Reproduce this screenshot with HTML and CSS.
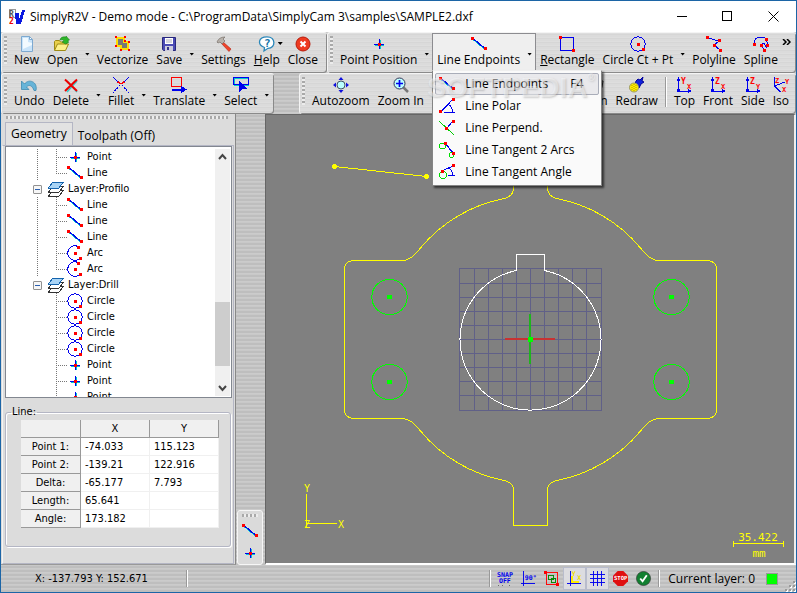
FILE: index.html
```html
<!DOCTYPE html>
<html lang="en">
<head>
<meta charset="utf-8">
<title>SimplyR2V</title>
<link rel="stylesheet" href="styles.css">
</head>
<body>
<svg class="defs" aria-hidden="true">
  <symbol id="i-line" viewBox="0 0 16 16"><path d="M2 3.500 14 13.500" stroke="#0cc" /><path d="M2 2.500 14 12.500" stroke="#00e" stroke-width="1.300"/><path d="M0 1h3v3H0zM13 11h3v3h-3z" fill="red"/></symbol>
  <symbol id="i-point" viewBox="0 0 16 16"><path d="M4 9.500h9M9.500 4v9" stroke="#0cc"/><path d="M3 8.500h10M8.500 3v10" stroke="#00e"/><path d="M7 7h3v3H7z" fill="red"/></symbol>
  <symbol id="i-circle" viewBox="0 0 16 16"><circle cx="8" cy="8" r="7.200" fill="none" stroke="#00e"/><path d="M7 7h3v3H7zM12 12h3v3h-3z" fill="red"/></symbol>
  <symbol id="i-arc" viewBox="0 0 16 16"><path d="M11 1.500A7.200 7.200 0 1 0 12 14" fill="none" stroke="#00e"/><path d="M7 7h3v3H7zM10 1h3v3h-3zM12 12h3v3h-3z" fill="red"/></symbol>
  <symbol id="i-layers" viewBox="0 0 16 16"><path d="M5 9.500h10.500L11 15H.5z" fill="#fff" stroke="#333"/><path d="M5 5.500h10.500L11 11H.5z" fill="#fff" stroke="#333"/><path d="M5 1h10.500L11 7H.5z" fill="#a9d4f5" stroke="#1463ad"/></symbol>
  <symbol id="i-polar" viewBox="0 0 16 16"><path d="M2 13.500 13 2" stroke="#00e" stroke-width="1.300"/><path d="M5 14.500h11" stroke="#00e"/><path d="M9 6q5 3 4 8" fill="none" stroke="#00e"/><path d="M13 0h3v3h-3zM0 12h3v3H0z" fill="red"/></symbol>
  <symbol id="i-perp" viewBox="0 0 16 16"><path d="M0 1 15 15" stroke="#0c0"/><path d="m7.500 8.500 6-7" stroke="#00e"/><path d="M13 0h3v3h-3zM6 7h3v3H6z" fill="red"/></symbol>
  <symbol id="i-tan2" viewBox="0 0 16 16"><circle cx="3.500" cy="4" r="3" fill="none" stroke="#0d0"/><circle cx="12.500" cy="13" r="2.500" fill="none" stroke="#0d0"/><path d="m6 1.500 8 9" stroke="#00e" stroke-width="1.300"/><path d="M5 0h3v3H5zM13 10h3v3h-3z" fill="red"/></symbol>
  <symbol id="i-tana" viewBox="0 0 16 16"><circle cx="4" cy="11" r="3.500" fill="none" stroke="#0d0"/><path d="m3 7 11-5M9 11.500h7M10 4q4 3 3 7" fill="none" stroke="#00e"/><path d="M2 6h3v3H2zM13 0h3v3h-3z" fill="red"/></symbol>
</svg>

<div class="window">
  <header class="titlebar">
    <svg class="logo" width="16" height="16" viewBox="0 0 16 16"><path d="M.5.500h6v8h-6z" fill="#fff" stroke="#999"/><text x="0" y="8" font-size="8" fill="#555">R</text><text x="0" y="15" font-size="8" fill="#e00">2</text><path d="M6 4h4v7l3-10h3l-4 14H7z" fill="#0a18e0"/></svg>
    <h1>SimplyR2V - Demo mode - C:\ProgramData\SimplyCam 3\samples\SAMPLE2.dxf</h1>
    <div class="caption">
      <button type="button" aria-label="Minimize"><svg width="11" height="11"><path d="M1 5.500h10" stroke="#000"/></svg></button>
      <button type="button" aria-label="Maximize"><svg width="11" height="11"><path d="M.5.500h9v9h-9z" fill="none" stroke="#000"/></svg></button>
      <button type="button" aria-label="Close window"><svg class="smooth" width="11" height="11"><path d="m.5.500 10 10m0-10-10 10" stroke="#000"/></svg></button>
    </div>
  </header>

  <div class="barrow">
    <div class="toolbar files">
      <i class="grip"></i>
      <button type="button" class="tool"><svg class="smooth" viewBox="0 0 16 16"><path d="M2.500.500h8l3 3v12h-11z" fill="#c9e4fa" stroke="#7da9d0"/><path d="M4 2h5v4l4 1v2L4 13z" fill="#f2faff"/><path d="M10.500.500v3h3z" fill="#fff" stroke="#7da9d0"/></svg>New</button>
      <button type="button" class="tool"><svg class="smooth" viewBox="0 0 16 16"><path d="M.5 14V5.500l1-1h4l1 1.500h6V9" fill="#e9d04c" stroke="#9f8a15"/><path d="m.5 14.500 3-6.500h11l-3 6.500z" fill="#fdf08a" stroke="#9f8a15"/><path d="M6 4q1-4 6-3v-1l3.500 4-1.500.500.500 2-3 1.500L8 6l2-1q-1-2-4-1z" fill="#2fb52a" stroke="#147a14" stroke-width=".5"/></svg>Open</button>
      <button type="button" class="drop" aria-label="Open recent"></button>
      <button type="button" class="tool"><svg viewBox="0 0 16 16"><path d="M2 2h7v4h4v7H6v-3H2z" fill="#777" stroke="#fd0" stroke-width="1.500"/><path d="M0 0h2v2H0zM9 0h2v2H9zM0 9h2v2H0zM5 13h2v2H5zM13 13h2v2h-2zM13 5h2v2h-2zM9 4h2v2H9z" fill="red"/></svg>Vectorize</button>
      <button type="button" class="tool"><svg class="smooth" viewBox="0 0 16 16"><path d="M1.500 1.500h13v13h-12l-1-1z" fill="#4a4ab4" stroke="#28287e"/><path d="M4 2h8v6H4z" fill="#fff"/><path d="M5 4h6M5 6h6" stroke="#aab"/><path d="M4 10h8v5H4z" fill="#ccd"/><path d="M6 11h2v3H6z" fill="#33338c"/></svg>Save</button>
      <button type="button" class="drop" aria-label="Save options"></button>
      <button type="button" class="tool"><svg class="smooth" viewBox="0 0 16 16"><path d="m6 5 9 8-2 2.500L5 7z" fill="#f0442a" stroke="#b02010" stroke-width=".6"/><path d="M1 6Q3 1 9 1L7 3l2 2-3 3-2-2-2 1z" fill="#b9b3ac" stroke="#776f68" stroke-width=".7"/></svg>Settings</button>
      <button type="button" class="tool help"><svg class="smooth" viewBox="0 0 16 16"><path d="M8 .800c9 0 9 11.500 1 11.500L5 15l.5-3.500C-2 9-1 .800 8 .800z" fill="#fff" stroke="#2b87ba" stroke-width="1.300"/><text x="5" y="11" font-size="11" class="mark">?</text></svg><span><u>H</u>elp</span></button>
      <button type="button" class="tool"><svg class="smooth" viewBox="0 0 16 16"><circle cx="8" cy="8" r="7" fill="#ee3a20" stroke="#b91b0b"/><path d="m5.500 5.500 5 5m0-5-5 5" stroke="#fff" stroke-width="2"/></svg>Close</button>
    </div>
    <div class="toolbar grow">
      <i class="grip"></i>
      <button type="button" class="tool"><svg viewBox="0 0 16 16"><use href="#i-point"/></svg>Point Position</button>
      <button type="button" class="drop" aria-label="Point tools"></button>
      <div class="open">
        <button type="button" class="tool"><svg viewBox="0 0 16 16"><use href="#i-line"/></svg>Line Endpoints</button>
        <button type="button" class="drop" aria-label="Line tools" aria-expanded="true"></button>
        <div class="menu">
          <button type="button" class="current"><svg><use href="#i-line"/></svg><span>Line Endpoints</span><kbd>F4</kbd></button>
          <button type="button"><svg><use href="#i-polar"/></svg><span>Line Polar</span></button>
          <button type="button"><svg><use href="#i-perp"/></svg><span>Line Perpend.</span></button>
          <button type="button"><svg><use href="#i-tan2"/></svg><span>Line Tangent 2 Arcs</span></button>
          <button type="button"><svg><use href="#i-tana"/></svg><span>Line Tangent Angle</span></button>
          <div class="watermark">SOFTPEDIA<sup>®</sup></div>
        </div>
      </div>
      <button type="button" class="tool"><svg viewBox="0 0 16 16"><path d="M1.500 1.500h13v13h-13z" fill="none" stroke="#00e"/><path d="M0 0h3v3H0zM13 13h3v3h-3z" fill="red"/></svg><span><u>R</u>ectangle</span></button>
      <button type="button" class="tool"><svg viewBox="0 0 16 16"><use href="#i-circle"/></svg>Circle Ct + Pt</button>
      <button type="button" class="drop" aria-label="Circle tools"></button>
      <button type="button" class="tool"><svg viewBox="0 0 16 16"><path d="m2 2 11 3-5 4 6 5" fill="none" stroke="#00e"/><path d="M0 0h3v3H0zM12 3h3v3h-3zM7 8h3v3H7zM13 13h3v3h-3z" fill="red"/></svg>Polyline</button>
      <button type="button" class="tool"><svg viewBox="0 0 16 16"><path d="M2 8C0 5 3 1 7 1s6 1 6 3 2 2 2 5-3 3-3 0-4-2-3 1l2 4" fill="none" stroke="#00e"/><path d="M0 7h3v3H0zM12 2h3v3h-3zM13 8h3v3h-3zM7 8h3v3H7zM10 13h3v3h-3z" fill="red"/></svg>Spline</button>
      <button type="button" class="more" aria-label="More tools"><svg class="smooth" width="9" height="6"><path d="m1 0 3 3-3 3M5 0l3 3-3 3" fill="none" stroke="#000" stroke-width="1.500"/></svg></button>
    </div>
  </div>

  <div class="barrow">
    <div class="toolbar edits">
      <i class="grip"></i>
      <button type="button" class="tool"><svg class="smooth" viewBox="0 0 16 16"><path d="M.5 4v8.500H8L5.500 10c3-3 6-1 7.500 3.500h2C17 5 8 1 3.500 7z" fill="#67b4d8" stroke="#3283ac" stroke-width=".7"/></svg>Undo</button>
      <button type="button" class="tool"><svg class="smooth" viewBox="0 0 16 16"><path d="m4 4 10 11M14 4 4 15" stroke="#3cc" stroke-width="1.500"/><path d="m2 2.500 12 11.500M14 2.500 2 14" stroke="#e00" stroke-width="2"/></svg>Delete</button>
      <button type="button" class="drop" aria-label="Delete options"></button>
      <button type="button" class="tool"><svg viewBox="0 0 16 16"><path d="m0 0 5 5m6 0 5-5" stroke="#00e"/><path d="m5 5q3 3 6 0" fill="none" stroke="red" stroke-width="1.500"/><path d="m7 8-7 8m9-8 7 8" stroke="#00e" stroke-dasharray="2 1"/></svg>Fillet</button>
      <button type="button" class="drop" aria-label="Fillet options"></button>
      <button type="button" class="tool"><svg viewBox="0 0 16 16"><path d="M.5.500h10v9h-10z" fill="none" stroke="red" stroke-width="1.400"/><path d="M2 13.500h9" stroke="#0cc"/><path d="M1 12.500h10" stroke="#00e" stroke-width="2"/><path d="m10 9 6 3.500-6 3.500z" fill="#00e"/></svg>Translate</button>
      <button type="button" class="drop" aria-label="Transform tools"></button>
      <button type="button" class="tool"><svg viewBox="0 0 16 16"><path d="M1.500 1.500h14v7h-14z" fill="none" stroke="#0cc"/><path d="M.5.500h15v7H.5z" fill="none" stroke="#00e"/><path d="m6 3 8 9H9.500L6 16z" fill="#00e"/></svg>Select</button>
      <button type="button" class="drop" aria-label="Select options"></button>
    </div>
    <div class="toolbar grow views">
      <i class="grip"></i>
      <button type="button" class="tool"><svg class="smooth" viewBox="0 0 16 16"><circle cx="8" cy="8" r="4" fill="#bff" stroke="#456"/><path d="m8 0 2.500 3h-5zM8 16l2.500-3h-5zM0 8l3-2.500v5zM16 8l-3-2.500v5z" fill="#11d"/></svg>Autozoom</button>
      <button type="button" class="tool"><svg class="smooth" viewBox="0 0 16 16"><path d="m10 10 5 5" stroke="#777" stroke-width="2.500"/><circle cx="6.500" cy="6.500" r="5.500" fill="#bff" stroke="#335"/><path d="M3 6.500h7M6.500 3v7" stroke="#00e" stroke-width="1.700"/></svg>Zoom In</button>
      <div class="endtools">
        <button type="button" class="tool"><svg class="smooth" viewBox="0 0 16 16"><path d="M3 15 1 9l2-1 2 1V2h2v5-6h2v6-5h2v5l1-3h2l-1 6-2 5z" fill="#fff" stroke="#222"/></svg>Pan</button>
        <button type="button" class="tool"><svg class="smooth" viewBox="0 0 16 16"><path d="m7 4 2-2 2 1 3-3-1 4 2 1-3 2-2 4-4-4z" fill="#12d" stroke="#009"/><circle cx="5" cy="10.500" r="4.500" fill="#fe0" stroke="#996"/><path d="M3 8v5M5 7v7M7 8v5" stroke="#a90" stroke-dasharray="1 1"/></svg>Redraw</button>
        <i class="rule"></i>
        <button type="button" class="tool"><svg viewBox="0 0 16 16"><path d="M2.500 2v12H14" fill="none" stroke="#00e"/><path d="m2.500 0 2 4h-4zM16 14l-4 2v-4zM1 12h3v3H1z" fill="#00e"/><text x="5" y="7" font-size="8">Y</text><text x="11" y="12" font-size="7">X</text></svg>Top</button>
        <button type="button" class="tool"><svg viewBox="0 0 16 16"><path d="M2.500 2v12H14" fill="none" stroke="#00e"/><path d="m2.500 0 2 4h-4zM16 14l-4 2v-4zM1 12h3v3H1z" fill="#00e"/><text x="5" y="7" font-size="8">Z</text><text x="11" y="12" font-size="7">X</text></svg>Front</button>
        <button type="button" class="tool"><svg viewBox="0 0 16 16"><path d="M2.500 2v12H14" fill="none" stroke="#00e"/><path d="m2.500 0 2 4h-4zM16 14l-4 2v-4zM1 12h3v3H1z" fill="#00e"/><text x="5" y="7" font-size="8">Z</text><text x="11" y="12" font-size="7">Y</text></svg>Side</button>
        <button type="button" class="tool"><svg viewBox="0 0 16 16"><path d="M1.500 0v9l6 6M1.500 9 12 5" fill="none" stroke="#00e"/><text x="2" y="6" font-size="7">Z</text><text x="12" y="7" font-size="7">Y</text><text x="9" y="15" font-size="7">X</text></svg>Iso</button>
      </div>
    </div>
  </div>

  <main>
    <section class="dock">
      <i class="grip flat"></i>
      <div class="tabs"><button type="button" class="on">Geometry</button><button type="button">Toolpath (Off)</button></div>
      <div class="page">
        <div class="treebox">
          <ul class="tree">
            <li><i class="trunk"></i><i class="twig"></i><svg><use href="#i-point"/></svg>Point</li>
            <li><i class="trunk"></i><i class="twig last"></i><svg><use href="#i-line"/></svg>Line</li>
            <li class="layer"><button type="button" aria-label="Collapse Profilo"></button><svg><use href="#i-layers"/></svg>Layer:Profilo</li>
            <li><i class="trunk"></i><i class="twig"></i><svg><use href="#i-line"/></svg>Line</li>
            <li><i class="trunk"></i><i class="twig"></i><svg><use href="#i-line"/></svg>Line</li>
            <li><i class="trunk"></i><i class="twig"></i><svg><use href="#i-line"/></svg>Line</li>
            <li><i class="trunk"></i><i class="twig"></i><svg><use href="#i-arc"/></svg>Arc</li>
            <li><i class="trunk"></i><i class="twig last"></i><svg><use href="#i-arc"/></svg>Arc</li>
            <li class="layer"><button type="button" aria-label="Collapse Drill"></button><svg><use href="#i-layers"/></svg>Layer:Drill</li>
            <li><i class="trunk none"></i><i class="twig"></i><svg><use href="#i-circle"/></svg>Circle</li>
            <li><i class="trunk none"></i><i class="twig"></i><svg><use href="#i-circle"/></svg>Circle</li>
            <li><i class="trunk none"></i><i class="twig"></i><svg><use href="#i-circle"/></svg>Circle</li>
            <li><i class="trunk none"></i><i class="twig"></i><svg><use href="#i-circle"/></svg>Circle</li>
            <li><i class="trunk none"></i><i class="twig"></i><svg><use href="#i-point"/></svg>Point</li>
            <li><i class="trunk none"></i><i class="twig"></i><svg><use href="#i-point"/></svg>Point</li>
            <li><i class="trunk none"></i><i class="twig"></i><svg><use href="#i-point"/></svg>Point</li>
          </ul>
          <div class="scroll">
            <svg class="smooth" width="15" height="16"><path d="m4 10 3.500-4 3.500 4" fill="none" stroke="#444" stroke-width="2"/></svg>
            <div class="track"><div class="thumb"></div></div>
            <svg class="smooth" width="15" height="16"><path d="m4 6 3.500 4L11 6" fill="none" stroke="#444" stroke-width="2"/></svg>
          </div>
        </div>
        <fieldset>
          <legend>Line:</legend>
          <table>
            <thead><tr><td></td><th scope="col">X</th><th scope="col">Y</th></tr></thead>
            <tbody>
              <tr><th scope="row">Point 1:</th><td>-74.033</td><td>115.123</td></tr>
              <tr><th scope="row">Point 2:</th><td>-139.21</td><td>122.916</td></tr>
              <tr><th scope="row">Delta:</th><td>-65.177</td><td>7.793</td></tr>
              <tr><th scope="row">Length:</th><td>65.641</td><td></td></tr>
              <tr><th scope="row">Angle:</th><td>173.182</td><td></td></tr>
            </tbody>
          </table>
        </fieldset>
      </div>
    </section>
    <aside class="strip">
      <div class="mini">
        <i class="grip flat"></i>
        <button type="button" aria-label="Line"><svg><use href="#i-line"/></svg></button>
        <button type="button" aria-label="Point"><svg><use href="#i-point"/></svg></button>
      </div>
    </aside>
    <section class="view">
      <svg class="drawing">
        <g transform="translate(-266 -115)" fill="none">
          <path stroke="#606088" d="M459.500 268v143M474.500 268v143M488.500 268v143M502.500 268v143M516.500 268v143M530.500 268v143M544.500 268v143M558.500 268v143M572.500 268v143M586.500 268v143M601.500 268v143M459 268.500h143M459 283.500h143M459 297.500h143M459 311.500h143M459 325.500h143M459 339.500h143M459 353.500h143M459 367.500h143M459 381.500h143M459 395.500h143M459 410.500h143"/>
          <path stroke="#fff" d="M516.500 270.500v-16h28v16A70.500 70.500 0 1 1 516.500 270.500"/>
          <g stroke="#ff0">
            <path d="M513.500 180v8q0 8-9 10.500A143.500 143.500 0 0 0 420.500 248Q411 260.500 402.500 260.500H353.500Q344.500 261 344.500 269.500V409.500Q344.500 418 353.500 418.500H402.500Q411 418.500 420.500 431A143.500 143.500 0 0 0 504.500 480.500Q513.500 483 513.500 490V525.500H547.500V490Q547.500 483 556.500 480.500A143.500 143.500 0 0 0 640.500 431Q650 418.500 658.500 418.500H707.500Q716.500 418 716.500 409.500V269.500Q716.500 261 707.500 260.500H658.500Q650 260.500 640.500 248A143.500 143.500 0 0 0 556.500 198.500Q547.500 196 547.500 188V180"/>
            <path d="m334.500 166.500 92 10M306.500 494v33M307 523.500h30M733.500 543.500h50M733.500 541v6M783.500 541v6"/>
          </g>
          <g fill="#ff0"><circle cx="334.500" cy="166.500" r="2.500"/><circle cx="426.500" cy="176.500" r="2.500"/></g>
          <g stroke="#0f0"><circle cx="389.500" cy="297" r="17.700"/><circle cx="671.500" cy="297" r="17.700"/><circle cx="389.500" cy="382" r="17.700"/><circle cx="671.500" cy="382" r="17.700"/></g>
          <g fill="#0f0"><circle cx="389.500" cy="297" r="2.500"/><circle cx="671.500" cy="297" r="2.500"/><circle cx="389.500" cy="382" r="2.500"/><circle cx="671.500" cy="382" r="2.500"/></g>
          <path stroke="#c83232" stroke-width="2" d="M505 339h50"/>
          <path stroke="#1eb41e" stroke-width="2" d="M530 314v50"/>
          <path fill="#0f0" d="M528 337h5v5h-5z"/>
          <g class="axis"><text x="307" y="492">Y</text><text x="307" y="528">Z</text><text x="341" y="528">X</text></g>
          <g class="scale"><text x="758" y="541">35.422</text><text x="759" y="557">mm</text></g>
        </g>
      </svg>
    </section>
  </main>

  <footer>
    <output class="coords">X: -137.793 Y: 152.671</output>
    <i class="rule"></i>
    <div class="toggles">
      <i class="rule"></i>
      <button type="button" aria-label="Snap"><svg viewBox="0 0 16 16"><g font-size="7" fill="#00e"><text x="-1" y="6">SNAP</text><text x="1" y="13">OFF</text></g><path d="M0 15.500h16" stroke="#666" stroke-dasharray="1 3"/></svg></button>
      <button type="button" aria-label="Ortho"><svg viewBox="0 0 16 16"><path d="M2.500 0v16M0 13.500h15" stroke="#00e"/><text x="4" y="10" font-size="7" fill="#00e">90°</text></svg></button>
      <button type="button" aria-label="Object select"><svg viewBox="0 0 16 16"><path d="M2.500 1.500h12v13h-12z" fill="none" stroke="red"/><path d="M4.500 4.500h6v5h-6zM7.500 7.500h5v5h-5z" fill="none" stroke="#080"/><path d="M0 0h3v3H0zM13 13h3v3h-3z" fill="red"/></svg></button>
      <button type="button" aria-label="Axes" class="pressed"><svg viewBox="0 0 16 16"><path d="M3.500 0v16M0 13.500h15" stroke="#00e"/><path d="M5.500 5v6.500H13" fill="none" stroke="#fe0" stroke-width="2"/><g font-size="7" fill="#ed0"><text x="5" y="5">Y</text><text x="11" y="10">X</text></g></svg></button>
      <button type="button" aria-label="Grid" class="pressed"><svg viewBox="0 0 16 16"><path d="M3.500 0v16M8.500 0v16M12.500 0v16M0 3.500h16M0 8.500h16M0 12.500h16" stroke="#00e"/></svg></button>
      <button type="button" aria-label="Stop"><svg class="smooth" viewBox="0 0 16 16"><path d="M5 0h6l5 5v6l-5 5H5l-5-5V5z" fill="#e01010"/><text x="1" y="10" font-size="6" fill="#fff">STOP</text></svg></button>
      <button type="button" aria-label="Confirm"><svg class="smooth" viewBox="0 0 16 16"><circle cx="8" cy="8" r="7.500" fill="#128030" stroke="#333" stroke-width=".7"/><path d="m4.500 8 2.500 3 4.500-6.500" fill="none" stroke="#fff" stroke-width="2"/></svg></button>
      <i class="rule"></i>
      <span class="layername">Current layer: 0</span>
      <i class="swatch"></i>
      <svg class="sizer" width="12" height="12"><path d="M10 2.500h2M6 6.500h2M10 6.500h2M2 10.500h2M6 10.500h2M10 10.500h2" stroke="#fff" stroke-width="2"/><path d="M9 1.500h2M5 5.500h2M9 5.500h2M1 9.500h2M5 9.500h2M9 9.500h2" stroke="#999" stroke-width="2"/></svg>
    </div>
  </footer>
</div>
</body>
</html>
```
FILE: styles.css
```css
* { box-sizing: border-box; }

body {
  margin: 0;
  font: 12px/16px "Open Sans", "Noto Sans", sans-serif;
  color: #000;
}

button {
  margin: 0;
  padding: 0;
  border: 0;
  background: none;
  font: inherit;
  color: inherit;
}

svg { display: block; flex: none; shape-rendering: crispEdges; }
svg.smooth { shape-rendering: auto; }
svg text { font-family: "DejaVu Sans Mono", monospace; font-weight: bold; }
.defs { position: absolute; width: 0; height: 0; }

.window {
  display: flex;
  flex-direction: column;
  height: 100vh;
  border: 1px solid #1c65a6;
  overflow: hidden;
  background: #c6c6c6;
}

/* Title bar */
.titlebar {
  display: flex;
  align-items: center;
  flex: none;
  height: 31px;
  padding-left: 8px;
  gap: 5px;
  background: #fff;
}
.titlebar h1 { margin: 0; font-size: 12px; font-weight: normal; white-space: nowrap; }
.caption { display: flex; margin-left: auto; }
.caption button { display: grid; place-items: center; width: 46px; height: 28px; }

/* Toolbars */
.barrow {
  display: flex;
  flex: none;
  height: 41px;
  background: repeating-linear-gradient(#c8c8c8 0 1px, #bebebe 1px 3px, #cbcbcb 3px 4px);
}
.toolbar {
  display: flex;
  padding: 3px 0 0 2px;
  border: solid #f4f4f4;
  border-width: 1px 0 0 1px;
  border-radius: 3px;
  box-shadow: inset -1px -1px #8a8a8a;
  background: repeating-linear-gradient(#dedede 0 1px, #d6d6d6 1px 2px, #dbdbdb 2px 4px);
}
.files { flex: 0 0 326px; }
.edits { flex: 0 0 273px; }
.views { margin-left: 25px; }
.grow { flex: 1; min-width: 0; }
.grip {
  flex: none;
  width: 3px;
  height: 28px;
  margin-right: 3px;
  background: repeating-linear-gradient(#a9a9a9 0 2px, #ececec 2px 4px);
}
.grip.flat {
  width: auto;
  height: 3px;
  margin: 0;
  background: repeating-linear-gradient(90deg, #a9a9a9 0 2px, #ececec 2px 4px);
}
.tool {
  display: flex;
  flex-direction: column;
  align-items: center;
  flex: none;
  height: 36px;
  padding: 0 4px;
  white-space: nowrap;
}
.tool svg { width: 16px; height: 16px; overflow: visible; }
.tool svg text { fill: red; }
.tool svg .mark { fill: #1672a8; }
.drop { position: relative; flex: none; width: 11px; height: 36px; }
.drop::after,
.help::after {
  content: "";
  display: block;
  width: 5px;
  height: 3px;
  margin: 0 auto;
  background: #000;
  clip-path: polygon(0 0, 100% 0, 50% 100%);
}
.help { position: relative; }
.help::after { position: absolute; right: 1px; top: 6px; }
.more { margin: 0 5px 26px auto; }
.rule {
  flex: none;
  width: 2px;
  height: 30px;
  margin: 0 3px;
  border-left: 1px solid #999;
  border-right: 1px solid #fff;
}
.endtools { display: flex; margin-left: auto; padding-right: 3px; }

/* Open split button and its menu */
.open {
  position: relative;
  display: flex;
  height: 40px;
  margin-top: -3px;
  padding-top: 2px;
  border: 1px solid #8c8c90;
  border-bottom: 0;
  background: #efefef;
}
.menu {
  position: absolute;
  z-index: 5;
  left: -1px;
  top: 36px;
  width: 170px;
  padding: 2px;
  border: 1px solid #858585;
  border-top-color: #efefef;
  background: #fafafa;
  box-shadow: 2px 2px 2px rgba(0, 0, 0, .6);
}
.menu > button {
  display: flex;
  align-items: center;
  gap: 10px;
  width: 100%;
  height: 22px;
  padding: 0 4px;
  white-space: nowrap;
  text-align: left;
}
.menu svg { width: 16px; height: 16px; }
.menu > .current { border: 1px solid #a9adb9; border-radius: 2px; background: #e9e9ec; padding: 0 3px; }
.menu kbd { margin-left: auto; padding-right: 12px; font: inherit; }
.watermark {
  position: absolute;
  left: -6px;
  top: 2px;
  font: bold 28px/30px "Liberation Sans", sans-serif;
  color: rgba(255, 255, 255, .45);
  text-shadow: 1px 1px 2px rgba(120, 120, 120, .35);
  pointer-events: none;
  white-space: nowrap;
}
.watermark sup { font-size: 10px; line-height: 10px; vertical-align: top; }

/* Work area */
main {
  display: grid;
  grid-template-columns: 235px 29px minmax(0, 1fr);
  flex: 1;
  min-height: 0;
}
.dock {
  display: flex;
  flex-direction: column;
  min-height: 0;
  padding: 2px 1px 0 1px;
  border-right: 1px solid #888;
  border-bottom: 1px solid #999;
  background: #dcdcdc;
}
.dock > .grip { flex: none; margin: 0 6px 0 4px; }
.tabs { display: flex; flex: none; align-items: flex-end; margin-top: 3px; padding-left: 3px; }
.tabs button { height: 18px; padding: 0 5px; }
.tabs .on {
  height: 23px;
  padding: 0 5px 1px;
  border: 1px solid #b4b6c4;
  border-bottom: 0;
  background: #e2e2e2;
}
.page {
  display: flex;
  flex-direction: column;
  flex: 1;
  min-height: 0;
  padding: 0 1px 16px 2px;
  border: 1px solid #b4b6c4;
  border-left-color: #f4f4f4;
  font: 11px/16px "DejaVu Sans Condensed", "DejaVu Sans", sans-serif;
}
.treebox {
  display: flex;
  flex: 1;
  min-height: 0;
  padding: 2px 1px 1px;
  overflow: hidden;
  border: 1px solid #828790;
  background: #fff;
}
.tree { flex: 1; margin: 0; padding: 0; list-style: none; }
.tree li { display: flex; align-items: center; height: 16px; padding-left: 30px; white-space: nowrap; }
.tree svg { width: 16px; height: 16px; margin-right: 4px; }
.trunk, .twig {
  flex: none;
  height: 16px;
  background-image: repeating-linear-gradient(#777 0 1px, transparent 1px 2px);
  background-size: 1px 16px;
  background-repeat: no-repeat;
}
.trunk { width: 19px; }
.trunk.none { background: none; }
.twig {
  width: 11px;
  background-image: repeating-linear-gradient(#777 0 1px, transparent 1px 2px), repeating-linear-gradient(90deg, #777 0 1px, transparent 1px 2px);
  background-size: 1px 16px, 11px 1px;
  background-position: 0 0, 0 8px;
}
.twig.last { background-size: 1px 8px, 11px 1px; }
.tree .layer { padding-left: 26px; }
.layer button {
  width: 9px;
  height: 9px;
  margin-right: 6px;
  border: 1px solid #919191;
  border-radius: 1px;
  background: linear-gradient(#2a5fb0, #2a5fb0) center / 5px 1px no-repeat #f6f6f6;
}
.scroll { display: flex; flex-direction: column; flex: none; width: 15px; background: #f0f0f0; }
.track { display: flex; flex: 1; align-items: flex-end; padding-bottom: 14px; }
.thumb { width: 100%; height: 64px; background: #cdcdcd; }

fieldset {
  flex: none;
  min-width: 0;
  margin: 6px 1px 0 0;
  padding: 0 10px 18px 15px;
  border: 1px solid #b4b6c4;
  border-radius: 3px;
  box-shadow: inset 1px 1px #fff, 1px 1px #fff;
}
legend { margin-left: -10px; padding: 0 1px; }
table { width: 198px; border-collapse: separate; border-spacing: 0; table-layout: fixed; background: #fff; }
td, th { height: 18px; padding: 0 4px; font-weight: normal; line-height: 16px; }
td { border-right: 1px solid #f0f0f0; border-bottom: 1px solid #f0f0f0; }
th, thead td { border-right: 1px solid #999; border-bottom: 1px solid #999; background: #f0f0f0; }
th:first-child, thead td:first-child { width: 60px; }

.strip {
  display: flex;
  align-items: flex-end;
  padding: 0 2px 0 1px;
  background: repeating-linear-gradient(#c8c8c8 0 1px, #bebebe 1px 3px, #cbcbcb 3px 4px);
}
.mini {
  display: flex;
  flex-direction: column;
  align-items: center;
  gap: 6px;
  width: 100%;
  padding: 3px 4px;
  border: 1px solid #f6f6f6;
  border-radius: 3px;
  background: #dadada;
}
.mini .grip { width: 16px; }
.mini svg { width: 16px; height: 16px; }
.view {
  min-width: 0;
  border: solid #666;
  border-width: 1px 0 0 1px;
  border-right: 2px solid #eee;
  border-bottom: 2px solid #fff;
  background: #808080;
}
.drawing { width: 100%; height: 100%; }
.drawing text { text-anchor: middle; fill: #ff0; font-weight: normal; }
.axis { font-size: 10px; }
.scale { font-size: 11px; }

/* Status bar */
footer {
  display: flex;
  align-items: center;
  flex: none;
  height: 27px;
  padding-left: 34px;
  background: repeating-linear-gradient(#c8c8c8 0 1px, #bebebe 1px 3px, #cbcbcb 3px 4px);
}
.coords { flex: 0 0 148px; font: 11px/16px "DejaVu Sans Condensed", "DejaVu Sans", sans-serif; white-space: nowrap; }
footer .rule { height: 17px; }
.toggles { display: flex; align-items: center; margin-left: auto; }
.toggles button { padding: 3px; border: 1px solid transparent; }
.toggles button svg { width: 15px; height: 15px; overflow: visible; }
.toggles .pressed { border-color: #b8bccc; background: #dcdce0; }
.layername { padding: 0 11px 0 5px; white-space: nowrap; }
.swatch { width: 12px; height: 12px; border: 1px solid #999; background: #0f0; }
.sizer { margin: 14px 0 0 6px; }
```
